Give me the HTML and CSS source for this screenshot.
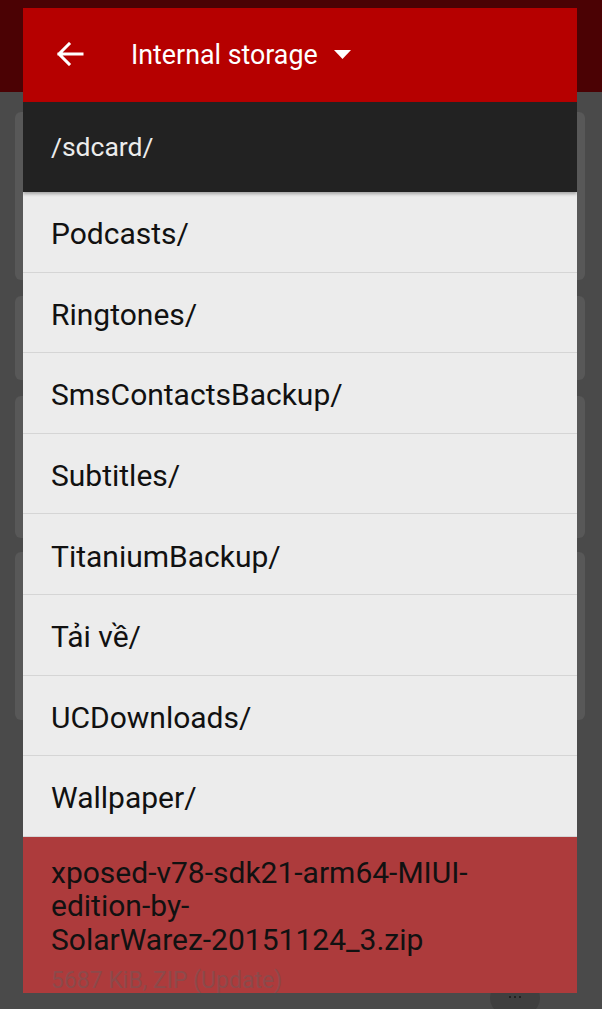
FILE: index.html
```html
<!DOCTYPE html>
<html>
<head>
<meta charset="utf-8">
<link rel="stylesheet" href="styles.css">
</head>
<body>
<div class="backdrop">
  <div class="topband"></div>
  <div class="cards">
    <div class="card c1"></div>
    <div class="card c2"></div>
    <div class="card c3"></div>
    <div class="card c4"></div>
  </div>
  <div class="fab"><span></span><span></span><span></span></div>
</div>

<div class="dialog">
  <div class="header">
    <svg class="back" width="28" height="24" viewBox="0 0 28 24">
      <path d="M26 12H3M13 2L3 12l10 10" fill="none" stroke="#fff" stroke-width="3" stroke-linecap="square"/>
    </svg>
    <span class="title">Internal storage</span>
    <svg class="caret" width="17" height="9" viewBox="0 0 17 9"><path d="M0 0h17L8.5 9z" fill="#fff"/></svg>
  </div>
  <div class="pathbar">/sdcard/</div>
  <ul class="list">
    <li class="item">Podcasts/</li>
    <li class="item">Ringtones/</li>
    <li class="item">SmsContactsBackup/</li>
    <li class="item">Subtitles/</li>
    <li class="item">TitaniumBackup/</li>
    <li class="item">Tải về/</li>
    <li class="item">UCDownloads/</li>
    <li class="item">Wallpaper/</li>
    <li class="item selected">
      <div class="fname">xposed-v78-sdk21-arm64-MIUI-edition-by-<span class="nowrap">SolarWarez-20151124_3.zip</span></div>
      <div class="meta">5687 KiB, ZIP (Update)</div>
    </li>
  </ul>
</div>
</body>
</html>
```

FILE: styles.css
```css
* { box-sizing: border-box; }
html, body {
  margin: 0;
  padding: 0;
  width: 602px;
  height: 1009px;
  overflow: hidden;
  background: #4a4a4a;
  font-family: Roboto, "Noto Sans", sans-serif;
}
.backdrop {
  position: relative;
  height: 1009px;
}
.topband {
  height: 92px;
  background: #4b0204;
}
.cards {
  display: flex;
  flex-direction: column;
  padding: 20px 17px 0 15px;
}
.card {
  background: #585858;
  border-radius: 6px;
}
.c1 { height: 168px; }
.c2 { height: 84px; margin-top: 16px; }
.c3 { height: 142px; margin-top: 16px; }
.c4 { height: 168px; margin-top: 14px; }
.fab {
  position: absolute;
  left: 490px;
  top: 978px;
  width: 50px;
  height: 40px;
  border-radius: 50%;
  background: #3f3f3f;
  display: flex;
  justify-content: center;
  align-items: flex-start;
  gap: 3px;
  padding-top: 18px;
}
.fab span {
  width: 2px;
  height: 2px;
  background: #222;
}

.dialog {
  position: absolute;
  left: 23px;
  top: 8px;
  width: 554px;
  height: 985px;
  overflow: hidden;
  background: #ececec;
  display: flex;
  flex-direction: column;
}
.header {
  height: 94px;
  flex: none;
  background: #b60000;
  display: flex;
  align-items: center;
  padding-left: 33px;
  color: #fff;
}
.back { margin-top: -2px; }
.title {
  font-size: 26.8px;
  margin-left: 47px;
}
.caret { margin-left: 16px; margin-top: -2px; }
.pathbar {
  height: 90px;
  flex: none;
  background: #222222;
  color: #ececec;
  font-size: 26.5px;
  display: flex;
  align-items: center;
  padding-left: 28px;
  padding-bottom: 2px;
  box-shadow: 0 2px 3px rgba(0,0,0,0.3);
  position: relative;
  z-index: 1;
}
.list {
  list-style: none;
  margin: 0;
  padding: 0;
  flex: 1;
  display: flex;
  flex-direction: column;
}
.item {
  height: 80.6px;
  flex: none;
  border-bottom: 1px solid #d5d5d5;
  display: flex;
  align-items: center;
  padding-left: 28px;
  padding-top: 4px;
  font-size: 30px;
  color: #111;
}
.item.selected {
  height: auto;
  flex: 1;
  display: block;
  border: none;
  background: #ad3b3c;
  padding: 19px 30px 0 28px;
}
.fname {
  line-height: 33.5px;
  color: #111;
}
.nowrap { white-space: nowrap; }
.meta {
  font-size: 23px;
  color: #8c4a4b;
  margin-top: 11px;
}
```
